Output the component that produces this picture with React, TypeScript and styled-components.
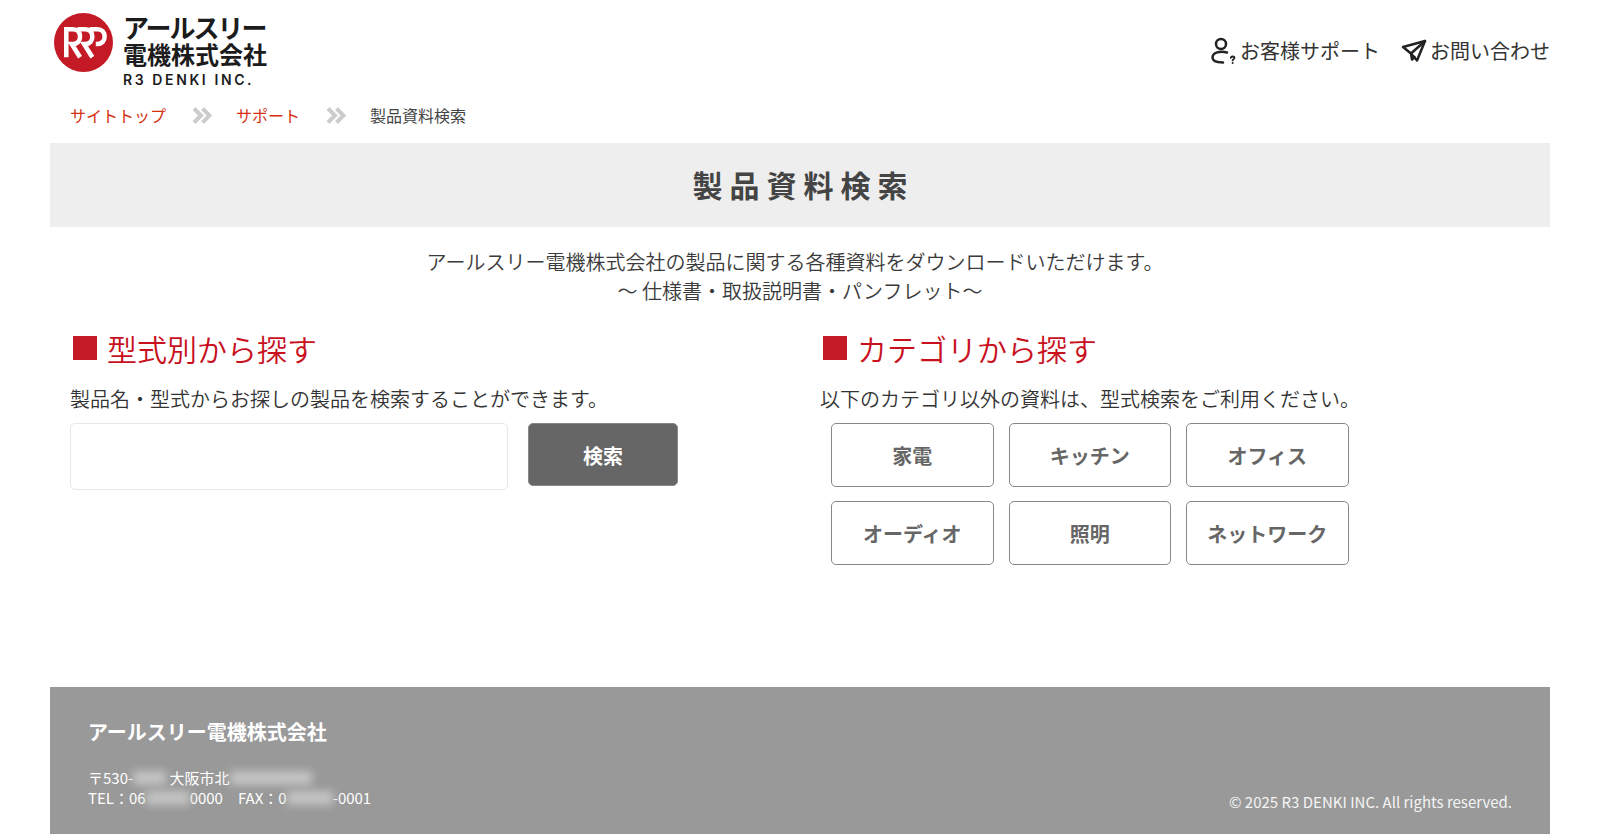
import React from "react";
import styled, { createGlobalStyle } from "styled-components";

const Global = createGlobalStyle`
  html, body { margin: 0; padding: 0; background: #fff; }
  body { font-family: "Noto Sans CJK JP", "Noto Sans", sans-serif; color: #333; overflow: hidden; }
`;

const Page = styled.div`
  width: 1500px;
  margin: 0 auto;
  height: 834px;
  display: flex;
  flex-direction: column;
`;

const Header = styled.header`
  height: 102px;
  display: flex;
  justify-content: space-between;
  align-items: flex-start;
`;

const Logo = styled.div`
  display: flex;
  gap: 10px;
  padding: 13px 0 0 4px;
`;

const LogoText = styled.div`
  display: flex;
  flex-direction: column;
  color: #1c1c1c;
  white-space: nowrap;
`;

const LogoKana = styled.div`
  font-size: 26px;
  line-height: 27px;
  font-weight: 700;
  letter-spacing: -2px;
`;

const LogoKanji = styled.div`
  font-size: 24px;
  line-height: 28px;
  font-weight: 700;
`;

const LogoLatin = styled.div`
  font-family: Inter, "Liberation Sans", sans-serif;
  font-size: 14px;
  line-height: 20px;
  font-weight: 600;
  letter-spacing: 2.6px;
  margin-top: 2px;
`;

const Nav = styled.nav`
  display: flex;
  gap: 21px;
  padding-top: 36px;
`;

const NavLink = styled.a`
  display: flex;
  align-items: center;
  gap: 3px;
  font-size: 20px;
  line-height: 30px;
  color: #333;
`;

const Crumbs = styled.div`
  display: flex;
  align-items: center;
  padding-left: 20px;
  height: 26px;
  font-size: 16px;
  line-height: 26px;
`;

const CrumbLink = styled.a`
  color: #d2300f;
`;

const CrumbCurrent = styled.span`
  color: #444;
`;

const CrumbSep = styled.span`
  display: flex;
  margin: 0 24px 0 26px;
`;

const TitleBand = styled.div`
  margin-top: 15px;
  height: 84px;
  padding-left: 7px;
  box-sizing: border-box;
  background: #eee;
  display: flex;
  align-items: center;
  justify-content: center;
`;

const Title = styled.h1`
  margin: 0 0 2px;
  font-size: 30px;
  line-height: 82px;
  font-weight: 700;
  letter-spacing: 7px;
  color: #444;
`;

const Intro = styled.p`
  margin: 20px 0 0;
  text-align: center;
  font-size: 20px;
  line-height: 29px;
  color: #3a3a3a;
  font-weight: 350;
`;

const IntroFirst = styled.span`
  padding-right: 10px;
`;

const Columns = styled.div`
  margin-top: 21px;
  display: grid;
  grid-template-columns: 750px 1fr;
  flex: 1;
`;

const Column = styled.section`
  padding-left: 20px;
`;

const Heading = styled.h2`
  margin: 0;
  display: flex;
  align-items: center;
  gap: 10px;
  font-size: 30px;
  line-height: 44px;
  font-weight: 350;
  color: #c8101e;
  &::before {
    content: "";
    width: 24px;
    height: 24px;
    margin-left: 3px;
    background: #c51a28;
  }
`;

const Lead = styled.p`
  margin: 14px 0 0;
  font-size: 20px;
  line-height: 30px;
  color: #333;
  font-weight: 350;
  white-space: nowrap;
`;

const SearchRow = styled.div`
  margin-top: 9px;
  display: flex;
  align-items: flex-start;
  gap: 20px;
`;

const SearchInput = styled.input`
  width: 438px;
  height: 67px;
  box-sizing: border-box;
  border: 1px solid #e8e8e8;
  border-radius: 5px;
  background: #fff;
`;

const SearchButton = styled.button`
  width: 150px;
  height: 63px;
  padding-top: 3px;
  border: 1px solid #888;
  border-radius: 5px;
  background: #666;
  color: #fff;
  font: 700 20px/1 "Noto Sans CJK JP", sans-serif;
`;

const CategoryGrid = styled.div`
  margin: 9px 0 0 11px;
  display: grid;
  grid-template-columns: repeat(3, 162.5px);
  grid-auto-rows: 63.5px;
  gap: 14.5px 15px;
`;

const CategoryButton = styled.button`
  box-sizing: border-box;
  padding-top: 3px;
  border: 1px solid #888;
  border-radius: 5px;
  background: #fff;
  color: #666;
  font: 700 20px/1 "Noto Sans CJK JP", sans-serif;
`;

const Footer = styled.footer`
  height: 147px;
  box-sizing: border-box;
  background: #999;
  padding: 30px 38px 0;
  display: flex;
  justify-content: space-between;
  color: #fff;
`;

const Company = styled.div`
  font-size: 20px;
  line-height: 30px;
  font-weight: 700;
`;

const Address = styled.div`
  margin-top: 21px;
  font-size: 15px;
  line-height: 20px;
  font-weight: 400;
  white-space: pre;
`;

const Redacted = styled.span<{ $w: number }>`
  display: inline-block;
  width: ${(p) => p.$w}px;
  height: 14px;
  vertical-align: -1px;
  background: #c4c4c4;
  filter: blur(4px);
`;

const Copyright = styled.div`
  align-self: flex-end;
  margin-bottom: 20px;
  font-size: 15px;
  line-height: 24px;
  font-weight: 400;
  color: #f4f4f4;
`;

const LogoMark = () => (
  <svg width="59" height="59" viewBox="0 0 60 60">
    <circle cx="30" cy="30" r="30" fill="#c41a26" />
    <g fill="none" stroke="#fff" strokeWidth="4.600">
      <path d="M12.500 45V16.500H19C24 16.500 26.500 19.500 26.500 24S24 31.500 19.500 31.500H18L26.500 45" />
      <path d="M24 16.500H31C36.500 16.500 39 19.500 39 24S36.500 31.500 32 31.500H30.500L39 45" />
      <path d="M36.500 16.500H44C49 16.500 51.500 19.500 51.500 24S49 31.500 44 31.500H42.500" />
    </g>
  </svg>
);

const SupportIcon = () => (
  <svg width="27" height="28" viewBox="0 0 27 28" fill="none" stroke="#222" strokeWidth="2.500" strokeLinecap="round">
    <circle cx="11" cy="7" r="5" />
    <path d="M17 15.500C10 13.500 2.500 15.500 2.500 20.500C2.500 24 6 25.500 13 25.500" />
    <path d="M20.800 20.800c.2-.9.900-1.300 1.800-1.300 1 0 1.800.6 1.800 1.400 0 1.300-1.800 1.300-1.800 2.500" strokeWidth="1.800" />
    <circle cx="22.600" cy="26" r="1" fill="#222" stroke="none" />
  </svg>
);

const PlaneIcon = () => (
  <svg width="26" height="24" viewBox="0 0 26 24" fill="none" stroke="#222" strokeWidth="2.500" strokeLinejoin="round" strokeLinecap="round">
    <path d="M2 8 24 2 16 21.500 10 14.500z" />
    <path d="M24 2 10 14.500 11 20.500 13.500 18" />
  </svg>
);

const DoubleChevron = () => (
  <svg width="20" height="17" viewBox="0 0 20 17" fill="none" stroke="#ccc" strokeWidth="4">
    <path d="M2 1.500 9 8.500 2 15.500" />
    <path d="M10.500 1.500 17.500 8.500l-7 7" />
  </svg>
);

const categories = ["家電", "キッチン", "オフィス", "オーディオ", "照明", "ネットワーク"];

export default function App() {
  return (
    <>
      <Global />
      <Page>
        <Header>
          <Logo>
            <LogoMark />
            <LogoText>
              <LogoKana>アールスリー</LogoKana>
              <LogoKanji>電機株式会社</LogoKanji>
              <LogoLatin>R3 DENKI INC.</LogoLatin>
            </LogoText>
          </Logo>
          <Nav>
            <NavLink>
              <SupportIcon />
              お客様サポート
            </NavLink>
            <NavLink>
              <PlaneIcon />
              お問い合わせ
            </NavLink>
          </Nav>
        </Header>
        <Crumbs>
          <CrumbLink>サイトトップ</CrumbLink>
          <CrumbSep>
            <DoubleChevron />
          </CrumbSep>
          <CrumbLink>サポート</CrumbLink>
          <CrumbSep>
            <DoubleChevron />
          </CrumbSep>
          <CrumbCurrent>製品資料検索</CrumbCurrent>
        </Crumbs>
        <TitleBand>
          <Title>製品資料検索</Title>
        </TitleBand>
        <Intro>
          <IntroFirst>アールスリー電機株式会社の製品に関する各種資料をダウンロードいただけます。</IntroFirst>
          <br />
          ～ 仕様書・取扱説明書・パンフレット～
        </Intro>
        <Columns>
          <Column>
            <Heading>型式別から探す</Heading>
            <Lead>製品名・型式からお探しの製品を検索することができます。</Lead>
            <SearchRow>
              <SearchInput type="text" aria-label="検索" />
              <SearchButton>検索</SearchButton>
            </SearchRow>
          </Column>
          <Column>
            <Heading>カテゴリから探す</Heading>
            <Lead>以下のカテゴリ以外の資料は、型式検索をご利用ください。</Lead>
            <CategoryGrid>
              {categories.map((c) => (
                <CategoryButton key={c}>{c}</CategoryButton>
              ))}
            </CategoryGrid>
          </Column>
        </Columns>
        <Footer>
          <div>
            <Company>アールスリー電機株式会社</Company>
            <Address>
              〒530-<Redacted $w={33} /> 大阪市北<Redacted $w={82} />
              <br />
              TEL：06<Redacted $w={44} />0000　FAX：0<Redacted $w={46} />-0001
            </Address>
          </div>
          <Copyright>© 2025 R3 DENKI INC. All rights reserved.</Copyright>
        </Footer>
      </Page>
    </>
  );
}
